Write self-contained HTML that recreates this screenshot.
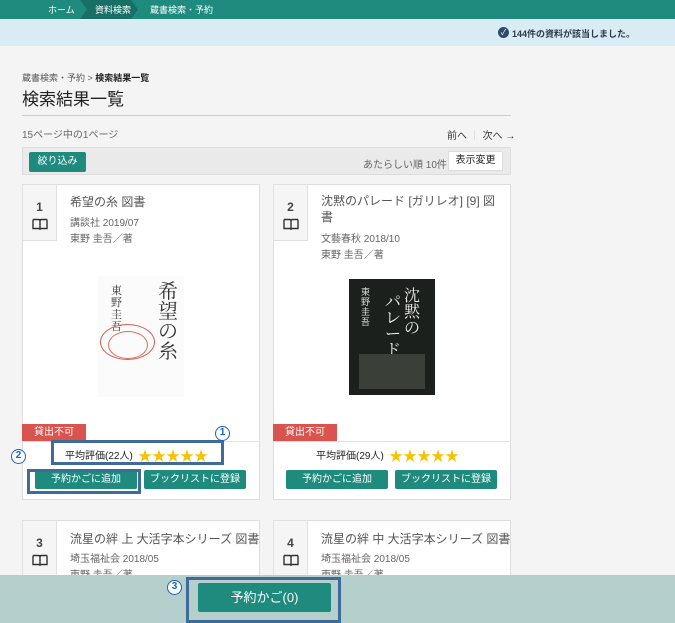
<!DOCTYPE html>
<html><head><meta charset="utf-8"><style>
*{margin:0;padding:0;box-sizing:border-box}
body{width:675px;height:623px;overflow:hidden;background:#f4f4f4;font-family:"Liberation Sans","Noto Sans CJK JP",sans-serif;color:#333;position:relative}
.a{position:absolute;white-space:nowrap}
.top{left:0;top:0;width:675px;height:19px;background:#1f8a7e}
.bl{left:0;top:19px;width:675px;height:27px;background:#d9ecf4}
.card{background:#fff;border:1px solid #ddd}
.num{background:#f5f5f5;border:1px solid #e0e0e0;text-align:center;font-size:12px;font-weight:bold;color:#444;line-height:16px}
.btn{background:#1f8a7e;color:#fff;font-size:10px;text-align:center;border-radius:2px;line-height:19px}
.badge{background:#d9534f;color:#fff;font-size:10px;text-align:center;line-height:17px}
.t{font-size:10px;color:#666}
.star{color:#f5c400;font-size:14px;letter-spacing:0px;line-height:16px}
.box{border:3px solid #3f6b98}
.circ{width:15px;height:15px;border:1.5px solid #1664c0;border-radius:50%;color:#1664c0;font-size:10px;font-weight:bold;text-align:center;line-height:12px;background:#fff}
.bk{display:block;margin:3px auto 0;width:16px;height:12px}
</style></head><body>
<div class="a top"></div>
<div class="a" style="left:80px;top:0;width:58px;height:19px;background:#186f66;clip-path:polygon(0 0,88% 0,100% 50%,88% 100%,0 100%,12% 50%)"></div>
<div class="a" style="left:48px;top:3px;font-size:9px;color:#fff">ホーム</div>
<div class="a" style="left:95px;top:3px;font-size:9px;color:#fff">資料検索</div>
<div class="a" style="left:150px;top:3px;font-size:9px;color:#fff">蔵書検索・予約</div>
<div class="a bl"></div>
<div class="a" style="left:498px;top:27px;width:11px;height:11px;border-radius:50%;background:#2a4a6e;color:#fff;font-size:8px;text-align:center;line-height:11px">✓</div>
<div class="a" style="left:512px;top:27px;font-size:9px;color:#2a3a4a;font-weight:bold">144件の資料が該当しました。</div>
<div class="a" style="left:22px;top:71px;font-size:9px;color:#555">蔵書検索・予約 &gt; <b style="color:#222">検索結果一覧</b></div>
<div class="a" style="left:22px;top:89px;font-size:17px;color:#222;line-height:22px">検索結果一覧</div>
<div class="a" style="left:22px;top:115px;width:489px;height:1px;background:#ccc"></div>
<div class="a" style="left:22px;top:126px;font-size:10px;color:#666">15ページ中の1ページ</div>
<div class="a" style="left:447px;top:127px;font-size:10px;color:#333">前へ <span style="color:#ccc">｜</span> 次へ →</div>
<div class="a" style="left:22px;top:147px;width:489px;height:28px;background:#eaeaea;border:1px solid #ddd"></div>
<div class="a btn" style="left:29px;top:152px;width:57px;height:20px;font-size:10px;line-height:20px">絞り込み</div>
<div class="a" style="left:363px;top:156px;font-size:10px;color:#666">あたらしい順 10件</div>
<div class="a" style="left:448px;top:151px;width:55px;height:20px;background:#fff;border:1px solid #ddd;font-size:10px;text-align:center;line-height:18px;color:#222">表示変更</div>

<!-- card1 -->
<div class="a card" style="left:22px;top:184px;width:238px;height:316px"></div>
<div class="a num" style="left:22px;top:184px;width:35px;height:57px;padding-top:14px">1<svg class="bk" viewBox="0 0 16 12"><path d="M1 1.5h5.5c1 0 1.5.6 1.5 1.5v8M15 1.5H9.5C8.5 1.5 8 2.1 8 3M1 1.5v9h6l1 .8 1-.8h6v-9" fill="none" stroke="#333" stroke-width="1.4"/></svg></div>
<div class="a" style="left:70px;top:193px;font-size:12px;color:#555">希望の糸 図書</div>
<div class="a t" style="left:70px;top:214px">講談社 2019/07</div>
<div class="a t" style="left:70px;top:230px">東野 圭吾／著</div>
<div class="a" style="left:98px;top:276px;width:86px;height:121px;background:#fbfbfb;overflow:hidden">
<div class="a" style="left:13px;top:8px;font-family:'Noto Serif CJK SC',serif;font-size:11px;width:12px;line-height:12px;white-space:normal">東野圭吾</div>
<div class="a" style="left:60px;top:4px;font-family:'Noto Serif CJK SC',serif;font-size:20px;width:22px;line-height:20px;white-space:normal">希望の糸</div>
<div class="a" style="left:2px;top:48px;width:55px;height:36px;border:1px solid #d06050;border-radius:50%"></div>
<div class="a" style="left:10px;top:55px;width:40px;height:28px;border:1px solid #d87060;border-radius:50%"></div>
</div>
<div class="a badge" style="left:22px;top:424px;width:64px;height:17px">貸出不可</div>
<div class="a" style="left:22px;top:441px;width:238px;height:1px;background:#e3e3e3"></div>
<div class="a" style="left:65px;top:450px;font-size:10px;color:#222;line-height:14px">平均評価(22人)</div>
<div class="a star" style="left:138px;top:448px">★★★★★</div>
<div class="a btn" style="left:35px;top:470px;width:102px;height:19px">予約かごに追加</div>
<div class="a btn" style="left:144px;top:470px;width:102px;height:19px">ブックリストに登録</div>

<!-- card2 -->
<div class="a card" style="left:273px;top:184px;width:238px;height:316px"></div>
<div class="a num" style="left:273px;top:184px;width:35px;height:57px;padding-top:14px">2<svg class="bk" viewBox="0 0 16 12"><path d="M1 1.5h5.5c1 0 1.5.6 1.5 1.5v8M15 1.5H9.5C8.5 1.5 8 2.1 8 3M1 1.5v9h6l1 .8 1-.8h6v-9" fill="none" stroke="#333" stroke-width="1.4"/></svg></div>
<div class="a" style="left:321px;top:193px;font-size:12px;color:#555;width:180px;line-height:16px;white-space:normal">沈黙のパレード [ガリレオ] [9] 図書</div>
<div class="a t" style="left:321px;top:230px">文藝春秋 2018/10</div>
<div class="a t" style="left:321px;top:246px">東野 圭吾／著</div>
<div class="a" style="left:349px;top:279px;width:86px;height:116px;background:#1c201c;overflow:hidden">
<div class="a" style="left:55px;top:8px;font-family:'Noto Serif CJK SC',serif;font-size:16px;width:18px;line-height:16px;color:#eee;white-space:normal">沈黙の</div>
<div class="a" style="left:36px;top:14px;font-family:'Noto Serif CJK SC',serif;font-size:16px;width:18px;line-height:16px;color:#eee;white-space:normal">パレード</div>
<div class="a" style="left:12px;top:8px;font-size:9px;width:10px;line-height:10px;color:#ddd;white-space:normal">東野圭吾</div>
<div class="a" style="left:10px;top:75px;width:66px;height:35px;background:#3a3f38"></div>
</div>
<div class="a badge" style="left:273px;top:424px;width:64px;height:17px">貸出不可</div>
<div class="a" style="left:273px;top:441px;width:238px;height:1px;background:#e3e3e3"></div>
<div class="a" style="left:316px;top:450px;font-size:10px;color:#222;line-height:14px">平均評価(29人)</div>
<div class="a star" style="left:389px;top:448px">★★★★★</div>
<div class="a btn" style="left:286px;top:470px;width:102px;height:19px">予約かごに追加</div>
<div class="a btn" style="left:395px;top:470px;width:102px;height:19px">ブックリストに登録</div>

<!-- card3/4 -->
<div class="a card" style="left:22px;top:520px;width:238px;height:100px"></div>
<div class="a num" style="left:22px;top:520px;width:35px;height:60px;padding-top:14px">3<svg class="bk" viewBox="0 0 16 12"><path d="M1 1.5h5.5c1 0 1.5.6 1.5 1.5v8M15 1.5H9.5C8.5 1.5 8 2.1 8 3M1 1.5v9h6l1 .8 1-.8h6v-9" fill="none" stroke="#333" stroke-width="1.4"/></svg></div>
<div class="a" style="left:70px;top:530px;font-size:12px;color:#555">流星の絆 上 大活字本シリーズ 図書</div>
<div class="a t" style="left:70px;top:550px">埼玉福祉会 2018/05</div>
<div class="a t" style="left:70px;top:566px">東野 圭吾／著</div>
<div class="a card" style="left:273px;top:520px;width:238px;height:100px"></div>
<div class="a num" style="left:273px;top:520px;width:35px;height:60px;padding-top:14px">4<svg class="bk" viewBox="0 0 16 12"><path d="M1 1.5h5.5c1 0 1.5.6 1.5 1.5v8M15 1.5H9.5C8.5 1.5 8 2.1 8 3M1 1.5v9h6l1 .8 1-.8h6v-9" fill="none" stroke="#333" stroke-width="1.4"/></svg></div>
<div class="a" style="left:321px;top:530px;font-size:12px;color:#555">流星の絆 中 大活字本シリーズ 図書</div>
<div class="a t" style="left:321px;top:550px">埼玉福祉会 2018/05</div>
<div class="a t" style="left:321px;top:566px">東野 圭吾／著</div>

<!-- bottom bar -->
<div class="a" style="left:0;top:575px;width:675px;height:48px;background:#b5d0cc"></div>
<div class="a btn" style="left:198px;top:583px;width:133px;height:29px;font-size:13px;line-height:29px">予約かご(0)</div>

<!-- annotations -->
<div class="a box" style="left:51px;top:440px;width:173px;height:25px"></div>
<div class="a box" style="left:27px;top:469px;width:114px;height:25px"></div>
<div class="a box" style="left:186px;top:577px;width:155px;height:46px"></div>
<div class="a circ" style="left:215px;top:426px">1</div>
<div class="a circ" style="left:11px;top:449px">2</div>
<div class="a circ" style="left:167px;top:580px">3</div>
</body></html>
